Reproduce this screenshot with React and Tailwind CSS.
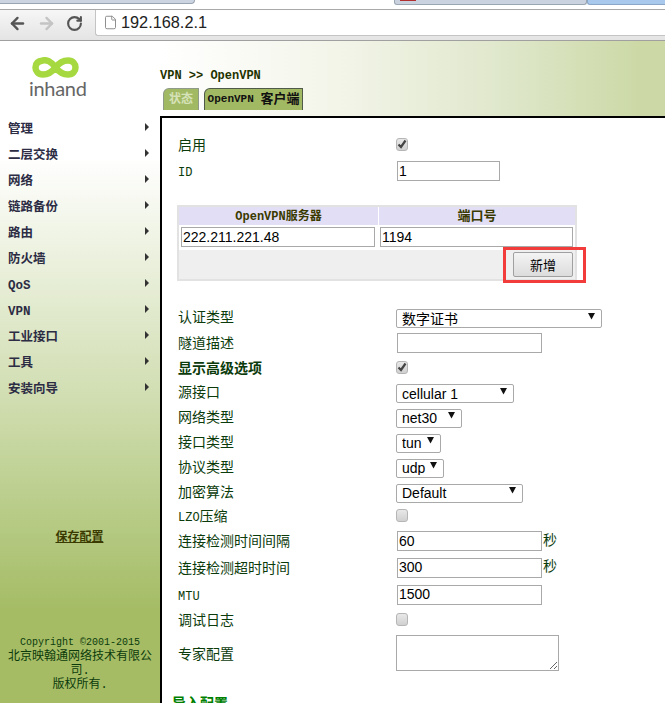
import React from "react";
import { ArrowLeft, ArrowRight, RotateCw, File } from "lucide-react";

const menu = ["管理", "二层交换", "网络", "链路备份", "路由", "防火墙", "QoS", "VPN", "工业接口", "工具", "安装向导"];

function Row({ h, label, bold, children }) {
  return (
    <div className="flex items-center pl-[16px]" style={{ height: h }}>
      <div className={"w-[218px] shrink-0 pt-[2px] text-[14px] leading-none text-[#0b3b0b] " + (bold ? "font-bold" : "")}>{label}</div>
      <div className="flex items-center">{children}</div>
    </div>
  );
}

const Lat = ({ children }) => <span className="text-[12px]">{children}</span>;

function Check({ checked }) {
  return (
    <span className="-mt-[2px] flex h-[13px] w-[12px] items-center justify-center rounded-[3px] border border-[#b5b5b5] bg-[linear-gradient(#e8e8e8,#d0d0d0)]">
      {checked && (
        <svg width="10" height="10" viewBox="0 0 10 10" fill="none">
          <path d="M1.5 5.5 L4 8 L8.5 1.5" stroke="#444" strokeWidth="2.2" />
        </svg>
      )}
    </span>
  );
}

function TextBox({ value = "", w = "w-[145px]" }) {
  return (
    <input
      readOnly
      value={value}
      className={w + " ml-px h-[20px] border border-[#a9a9a9] bg-white px-[1px] font-['Liberation_Sans','Noto_Sans_CJK_SC',sans-serif] text-[14px] text-black outline-none"}
    />
  );
}

function Sel({ value, w }) {
  return (
    <div className={"relative h-[19px] " + w}>
      <select
        value={value}
        onChange={() => {}}
        className="h-full w-full appearance-none rounded-[2px] border border-[#a9a9a9] bg-white pl-[5px] font-['Liberation_Sans','Noto_Sans_CJK_SC',sans-serif] text-[14px] leading-none text-black outline-none"
      >
        <option>{value}</option>
      </select>
      <svg className="absolute right-[7px] top-[5px]" width="7" height="7" viewBox="0 0 7 7">
        <path d="M0 0 H7 L3.5 6.5 Z" fill="#111" />
      </svg>
    </div>
  );
}

function Logo() {
  return (
    <div className="flex h-[75px] flex-col items-start pl-[29px] pt-[16px]">
      <svg className="ml-[3px]" width="47" height="21" viewBox="0 0 47 21" fill="none">
        <path d="M23.5 10.5 C19 4 14 2.5 11 3.5 C5.5 4 3.5 7 3.5 10.5 C3.5 14 6 17.5 11 17.5 C16 17.5 20 15 23.5 10.5 C27 6 31 3.5 36 3.5 C41 3.5 43.5 7 43.5 10.5 C43.5 14 41 17.5 36 17.5 C31 17.5 27 15 23.5 10.5" stroke="#a5d93f" strokeWidth="6.5" />
      </svg>
      <div className="font-['Lato',sans-serif] text-[20px] font-normal leading-[20px] tracking-[-0.3px] text-[#666666]">inhand</div>
    </div>
  );
}

export default function App() {
  return (
    <div className="relative flex h-[703px] w-[665px] flex-col overflow-hidden bg-white font-['Liberation_Mono','Noto_Sans_CJK_SC',monospace]">
      {/* browser chrome */}
      <div className="flex h-[10px] shrink-0 items-start border-b border-[#a8a8a8] bg-white">
        <div className="h-[4px] w-[195px] rounded-br-[4px] border-b border-r border-[#9aa5b2] bg-[#cbd4e0]"></div>
        <div className="w-[199px]"></div>
        <div className="flex h-[5px] w-[193px] rounded-b-[3px] border border-t-0 border-[#9aa5b2] bg-[#c9d2de] pl-[5px]">
          <div className="h-[1px] w-[16px] bg-[#b03030]"></div>
        </div>
        <div className="h-[5px] flex-1 rounded-bl-[3px] border-b border-l border-[#8aa6c8] bg-[#a9c9ec]"></div>
      </div>
      <div className="flex h-[31px] shrink-0 items-start border-b border-[#a0a0a0] bg-[linear-gradient(#f6f6f6,#e4e4e4)]">
        <div className="flex h-[25px] w-[95px] items-center pl-[8px] pt-[2px]">
          <ArrowLeft size={19} strokeWidth={3} className="text-[#555]" />
          <ArrowRight size={19} strokeWidth={3} className="ml-[10px] text-[#c4c4c4]" />
          <RotateCw size={17} strokeWidth={3} className="ml-[10px] text-[#555]" />
        </div>
        <div className="flex h-[26px] flex-1 items-center rounded-bl-[3px] border-b border-l border-[#c4c4c4] bg-white pl-[7px]">
          <File size={15} strokeWidth={1.5} className="text-[#888]" />
          <span className="ml-[3px] font-['Liberation_Sans',sans-serif] text-[16.3px] text-[#222]">192.168.2.1</span>
        </div>
      </div>

      <div className="flex min-h-0 flex-1">
        {/* sidebar */}
        <aside className="w-[160px] shrink-0 bg-[linear-gradient(#ffffff_0px,#ffffff_115px,#d0ddb0_360px,#b8cc88_470px,#a5bc65_570px,#a5bc65_100%)]">
          <Logo />
          <nav>
            {menu.map((m) => (
              <div key={m} className="flex h-[26px] items-center justify-between pl-[8px] pr-[11px] text-[12.5px] font-bold leading-none text-[#2c2c44]">
                <span className="pt-[3px]">{m}</span>
                <svg className="-mt-[4px]" width="4" height="8" viewBox="0 0 4 8"><path d="M0 0 L4 4 L0 8 Z" fill="#333" /></svg>
              </div>
            ))}
          </nav>
          <div className="mt-[127px] flex h-[18px] items-center justify-center pr-[1px] text-[12px] font-bold text-[#3a3a00] underline">保存配置</div>
          <div className="mt-[89px] px-[6px] text-center text-[12px] leading-[14px] text-[#0b3b0b]">
            <div className="whitespace-nowrap text-[10px]">Copyright ©2001-2015</div>
            <div>北京映翰通网络技术有限公司.</div>
            <div>版权所有.</div>
          </div>
        </aside>

        <main className="flex min-w-0 flex-1 flex-col">
          {/* header */}
          <div className="flex h-[75px] shrink-0 flex-col justify-end bg-[linear-gradient(90deg,#ffffff_0%,#f3f5e9_35%,#dfe7cb_68%,#ccd9a6_95%)] pb-[6px]">
            <div className="mb-[5px] text-[12px] font-bold leading-[14px] text-[#1f3300]">VPN &gt;&gt; OpenVPN</div>
            <div className="ml-[3px] flex gap-[5px]">
              <div className="flex h-[22px] w-[36px] items-center justify-center rounded-tl-[6px] border-l border-r border-t border-[#8f9a88] bg-[#a2b964] text-[12px] font-bold text-[#d6e2b8]">状态</div>
              <div className="flex h-[22px] w-[99px] items-center justify-center rounded-tl-[6px] border-l border-r border-t border-[#4f5a48] bg-[#a2b964] text-[11px] font-bold text-[#111]">OpenVPN&nbsp;<span className="text-[13px]">客户端</span></div>
            </div>
          </div>
          {/* body */}
          <div className="flex-1 border-l-2 border-t-2 border-black pt-[14px]">
            <Row h={26} label="启用"><Check checked /></Row>
            <Row h={26} label={<Lat>ID</Lat>}><TextBox value="1" w="w-[103px]" /></Row>

            <div className="ml-[15px] mt-[21px] w-[400px] border-2 border-[#e2e2e2]">
              <div className="grid grid-cols-[199px_1fr] gap-x-px">
                <div className="flex h-[18px] items-center justify-center bg-[#e2def5] pt-[2px] text-[12px] font-bold text-[#3a3a00]">OpenVPN服务器</div>
                <div className="flex h-[18px] items-center justify-center bg-[#e2def5] pt-[2px] text-[13px] font-bold text-[#3a3a00]">端口号</div>
                <div className="flex h-[24px] items-center pl-[1px]"><TextBox value="222.211.221.48" w="w-[194px]" /></div>
                <div className="flex h-[24px] items-center"><TextBox value="1194" w="w-[193px]" /></div>
              </div>
              <div className="mt-px flex h-[29px] items-center justify-end bg-[#efefef] pr-[2px]">
                <button className="h-[25px] w-[60px] rounded-[2px] border border-[#a0a0a0] bg-[linear-gradient(#f4f4f4,#dcdcdc)] font-['Noto_Sans_CJK_SC',sans-serif] text-[13px] text-black">新增</button>
              </div>
            </div>

            <div className="mt-[23px]">
              <Row h={26} label="认证类型"><Sel value="数字证书" w="w-[206px]" /></Row>
              <Row h={26} label="隧道描述"><TextBox /></Row>
              <Row h={24} label="显示高级选项" bold><Check checked /></Row>
              <Row h={24} label="源接口"><Sel value="cellular 1" w="w-[118px]" /></Row>
              <Row h={25} label="网络类型"><Sel value="net30" w="w-[66px]" /></Row>
              <Row h={25} label="接口类型"><Sel value="tun" w="w-[45px]" /></Row>
              <Row h={25} label="协议类型"><Sel value="udp" w="w-[48px]" /></Row>
              <Row h={25} label="加密算法"><Sel value="Default" w="w-[127px]" /></Row>
              <Row h={24} label={<><Lat>LZO</Lat>压缩</>}><Check /></Row>
              <Row h={26} label="连接检测时间间隔"><TextBox value="60" /><span className="ml-[1px] text-[14px] text-[#0b3b0b]">秒</span></Row>
              <Row h={27} label="连接检测超时时间"><TextBox value="300" /><span className="ml-[1px] text-[14px] text-[#0b3b0b]">秒</span></Row>
              <Row h={27} label={<Lat>MTU</Lat>}><TextBox value="1500" /></Row>
              <Row h={24} label="调试日志"><Check /></Row>
              <Row h={44} label="专家配置">
                <textarea readOnly className="-mt-[2px] block h-[36px] w-[163px] border border-[#a9a9a9] bg-white outline-none"></textarea>
              </Row>
              <div className="ml-[10px] mt-[21px] text-[14px] font-bold leading-none text-[#008000]">导入配置</div>
            </div>
          </div>
        </main>
      </div>

      {/* annotation box */}
      <div className="absolute left-[503px] top-[247px] h-[36px] w-[83px] border-[3px] border-[#f23b3b]"></div>
    </div>
  );
}
